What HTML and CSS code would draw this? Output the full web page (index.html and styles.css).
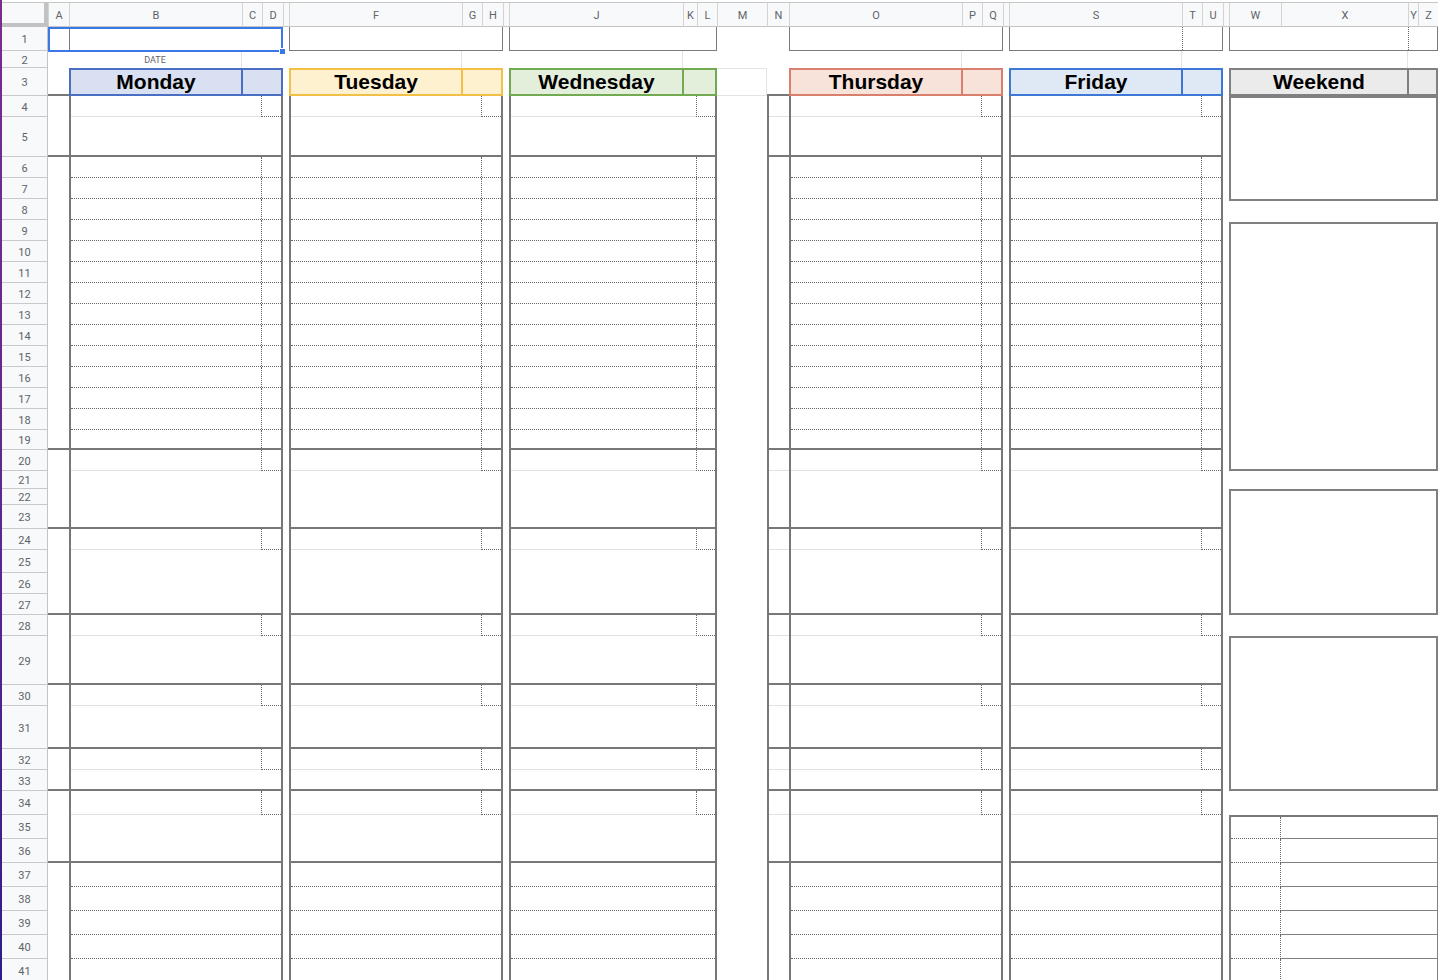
FILE: index.html
```html
<!DOCTYPE html>
<html lang="en">
<head>
<meta charset="utf-8">
<title>Weekly Planner</title>
<link rel="stylesheet" href="styles.css">
</head>
<body>
<div class="app">
  <div class="strip"></div>
  <div class="sheet">
    <div class="colhead">
      <div class="corner"></div>
      <div class="ch w21">A</div>
      <div class="ch w173">B</div>
      <div class="ch w20">C</div>
      <div class="ch w21">D</div>
      <div class="ch w6"></div>
      <div class="ch w173">F</div>
      <div class="ch w20">G</div>
      <div class="ch w21">H</div>
      <div class="ch w6"></div>
      <div class="ch w174">J</div>
      <div class="ch w14">K</div>
      <div class="ch w20">L</div>
      <div class="ch w50">M</div>
      <div class="ch w22">N</div>
      <div class="ch w173">O</div>
      <div class="ch w20">P</div>
      <div class="ch w21">Q</div>
      <div class="ch w6"></div>
      <div class="ch w173">S</div>
      <div class="ch w20">T</div>
      <div class="ch w21">U</div>
      <div class="ch w6"></div>
      <div class="ch w52">W</div>
      <div class="ch w127">X</div>
      <div class="ch w10">Y</div>
      <div class="ch w20">Z</div>
    </div>

    <div class="grid">
      <div class="rowhead">
        <div class="rn h24">1</div>
        <div class="rn h17">2</div>
        <div class="rn h28">3</div>
        <div class="rn">4</div>
        <div class="rn h40">5</div>
        <div class="rn">6</div>
        <div class="rn">7</div>
        <div class="rn">8</div>
        <div class="rn">9</div>
        <div class="rn">10</div>
        <div class="rn">11</div>
        <div class="rn">12</div>
        <div class="rn">13</div>
        <div class="rn">14</div>
        <div class="rn">15</div>
        <div class="rn">16</div>
        <div class="rn">17</div>
        <div class="rn">18</div>
        <div class="rn h20">19</div>
        <div class="rn">20</div>
        <div class="rn h18">21</div>
        <div class="rn h16">22</div>
        <div class="rn h24">23</div>
        <div class="rn">24</div>
        <div class="rn h23">25</div>
        <div class="rn">26</div>
        <div class="rn">27</div>
        <div class="rn">28</div>
        <div class="rn h49">29</div>
        <div class="rn">30</div>
        <div class="rn h43">31</div>
        <div class="rn">32</div>
        <div class="rn">33</div>
        <div class="rn h24">34</div>
        <div class="rn h24">35</div>
        <div class="rn h24">36</div>
        <div class="rn h24">37</div>
        <div class="rn h24">38</div>
        <div class="rn h24">39</div>
        <div class="rn h24">40</div>
        <div class="rn h24">41</div>
      </div>

      <!-- column A -->
      <div class="side sa">
        <div class="sp"></div>
        <div class="ss s1"></div>
        <div class="ss s2"></div>
        <div class="ss s3"></div>
        <div class="ss s4"></div>
        <div class="ss s5"></div>
        <div class="ss s6"></div>
        <div class="ss s7"></div>
        <div class="ss s8"></div>
      </div>

      <!-- Monday -->
      <div class="day mon">
        <div class="r1"><div class="rm"></div></div>
        <div class="r2"><div class="rm">DATE</div></div>
        <div class="hdr"><div class="hm">Monday</div><div class="hx"></div></div>
        <div class="sec s1"><div class="lead"></div></div>
        <div class="sec s2">
          <div class="ln"></div><div class="ln"></div><div class="ln"></div><div class="ln"></div><div class="ln"></div>
          <div class="ln"></div><div class="ln"></div><div class="ln"></div><div class="ln"></div><div class="ln"></div>
          <div class="ln"></div><div class="ln"></div><div class="ln"></div><div class="ln last"></div>
        </div>
        <div class="sec s3"><div class="lead"></div></div>
        <div class="sec s4"><div class="lead"></div></div>
        <div class="sec s5"><div class="lead"></div></div>
        <div class="sec s6"><div class="lead"></div></div>
        <div class="sec s7"><div class="lead"></div></div>
        <div class="sec s8"><div class="lead tall"></div></div>
        <div class="sec s9"><div class="ln2"></div><div class="ln2"></div><div class="ln2"></div><div class="ln2"></div><div class="ln2"></div></div>
      </div>

      <div class="gap"></div>

      <!-- Tuesday -->
      <div class="day tue">
        <div class="r1"><div class="rm"></div></div>
        <div class="r2"><div class="rm"></div></div>
        <div class="hdr"><div class="hm">Tuesday</div><div class="hx"></div></div>
        <div class="sec s1"><div class="lead"></div></div>
        <div class="sec s2">
          <div class="ln"></div><div class="ln"></div><div class="ln"></div><div class="ln"></div><div class="ln"></div>
          <div class="ln"></div><div class="ln"></div><div class="ln"></div><div class="ln"></div><div class="ln"></div>
          <div class="ln"></div><div class="ln"></div><div class="ln"></div><div class="ln last"></div>
        </div>
        <div class="sec s3"><div class="lead"></div></div>
        <div class="sec s4"><div class="lead"></div></div>
        <div class="sec s5"><div class="lead"></div></div>
        <div class="sec s6"><div class="lead"></div></div>
        <div class="sec s7"><div class="lead"></div></div>
        <div class="sec s8"><div class="lead tall"></div></div>
        <div class="sec s9"><div class="ln2"></div><div class="ln2"></div><div class="ln2"></div><div class="ln2"></div><div class="ln2"></div></div>
      </div>

      <div class="gap"></div>

      <!-- Wednesday -->
      <div class="day wed">
        <div class="r1"><div class="rm"></div></div>
        <div class="r2"><div class="rm"></div></div>
        <div class="hdr"><div class="hm">Wednesday</div><div class="hx"></div></div>
        <div class="sec s1"><div class="lead"></div></div>
        <div class="sec s2">
          <div class="ln"></div><div class="ln"></div><div class="ln"></div><div class="ln"></div><div class="ln"></div>
          <div class="ln"></div><div class="ln"></div><div class="ln"></div><div class="ln"></div><div class="ln"></div>
          <div class="ln"></div><div class="ln"></div><div class="ln"></div><div class="ln last"></div>
        </div>
        <div class="sec s3"><div class="lead"></div></div>
        <div class="sec s4"><div class="lead"></div></div>
        <div class="sec s5"><div class="lead"></div></div>
        <div class="sec s6"><div class="lead"></div></div>
        <div class="sec s7"><div class="lead"></div></div>
        <div class="sec s8"><div class="lead tall"></div></div>
        <div class="sec s9"><div class="ln2"></div><div class="ln2"></div><div class="ln2"></div><div class="ln2"></div><div class="ln2"></div></div>
      </div>

      <!-- column M -->
      <div class="mcol"><div class="m3"></div></div>

      <!-- column N -->
      <div class="side sn">
        <div class="sp"></div>
        <div class="ss s1"><div class="nl"></div></div>
        <div class="ss s2"></div>
        <div class="ss s3"><div class="nl"></div></div>
        <div class="ss s4"><div class="nl"></div></div>
        <div class="ss s5"><div class="nl"></div></div>
        <div class="ss s6"><div class="nl"></div></div>
        <div class="ss s7"><div class="nl"></div></div>
        <div class="ss s8"><div class="nl tall"></div></div>
        <div class="ss s9"></div>
      </div>

      <!-- Thursday -->
      <div class="day thu">
        <div class="r1"><div class="rm"></div></div>
        <div class="r2"><div class="rm"></div></div>
        <div class="hdr"><div class="hm">Thursday</div><div class="hx"></div></div>
        <div class="sec s1"><div class="lead"></div></div>
        <div class="sec s2">
          <div class="ln"></div><div class="ln"></div><div class="ln"></div><div class="ln"></div><div class="ln"></div>
          <div class="ln"></div><div class="ln"></div><div class="ln"></div><div class="ln"></div><div class="ln"></div>
          <div class="ln"></div><div class="ln"></div><div class="ln"></div><div class="ln last"></div>
        </div>
        <div class="sec s3"><div class="lead"></div></div>
        <div class="sec s4"><div class="lead"></div></div>
        <div class="sec s5"><div class="lead"></div></div>
        <div class="sec s6"><div class="lead"></div></div>
        <div class="sec s7"><div class="lead"></div></div>
        <div class="sec s8"><div class="lead tall"></div></div>
        <div class="sec s9"><div class="ln2"></div><div class="ln2"></div><div class="ln2"></div><div class="ln2"></div><div class="ln2"></div></div>
      </div>

      <div class="gap"></div>

      <!-- Friday -->
      <div class="day fri">
        <div class="r1"><div class="rm dot"></div></div>
        <div class="r2"><div class="rm"></div></div>
        <div class="hdr"><div class="hm">Friday</div><div class="hx"></div></div>
        <div class="sec s1"><div class="lead"></div></div>
        <div class="sec s2">
          <div class="ln"></div><div class="ln"></div><div class="ln"></div><div class="ln"></div><div class="ln"></div>
          <div class="ln"></div><div class="ln"></div><div class="ln"></div><div class="ln"></div><div class="ln"></div>
          <div class="ln"></div><div class="ln"></div><div class="ln"></div><div class="ln last"></div>
        </div>
        <div class="sec s3"><div class="lead"></div></div>
        <div class="sec s4"><div class="lead"></div></div>
        <div class="sec s5"><div class="lead"></div></div>
        <div class="sec s6"><div class="lead"></div></div>
        <div class="sec s7"><div class="lead"></div></div>
        <div class="sec s8"><div class="lead tall"></div></div>
        <div class="sec s9"><div class="ln2"></div><div class="ln2"></div><div class="ln2"></div><div class="ln2"></div><div class="ln2"></div></div>
      </div>

      <div class="gap"></div>

      <!-- Weekend -->
      <div class="weekend">
        <div class="r1"><div class="rm dot"></div></div>
        <div class="r2"><div class="rm"></div></div>
        <div class="hdr"><div class="hm">Weekend</div><div class="hx"></div></div>
        <div class="wbox b1"></div>
        <div class="wgap g21"></div>
        <div class="wbox b2"></div>
        <div class="wgap g18"></div>
        <div class="wbox b3"></div>
        <div class="wgap g21"></div>
        <div class="wbox b4"></div>
        <div class="wgap g24"></div>
        <div class="wtable">
          <div class="tr first"><div class="tw"></div><div class="tx"></div></div>
          <div class="tr"><div class="tw"></div><div class="tx"></div></div>
          <div class="tr"><div class="tw"></div><div class="tx"></div></div>
          <div class="tr"><div class="tw"></div><div class="tx"></div></div>
          <div class="tr"><div class="tw"></div><div class="tx"></div></div>
          <div class="tr"><div class="tw"></div><div class="tx"></div></div>
          <div class="tr"><div class="tw"></div><div class="tx"></div></div>
        </div>
      </div>
    </div>
  </div>

  <div class="selection"><span class="handle"></span></div>
</div>
</body>
</html>
```

FILE: styles.css
```css
* { box-sizing: border-box; margin: 0; padding: 0; }

html, body {
  width: 1438px;
  height: 980px;
  overflow: hidden;
  background: #fff;
}

body {
  font-family: Roboto, "Liberation Sans", Arial, sans-serif;
  color: #202124;
}

.app {
  position: relative;
  display: flex;
  height: 980px;
}

.strip {
  flex: none;
  width: 2px;
  background: linear-gradient(#7b2b8e, #5d2790 55%, #2f1c8a);
}

.sheet {
  flex: 1;
  display: flex;
  flex-direction: column;
  padding-top: 2px;
  min-width: 0;
}

/* ---------- column header ---------- */
.colhead {
  flex: none;
  display: flex;
  height: 25px;
}

.corner {
  flex: none;
  width: 46px;
  background: #f8f9fa;
  border-top: 1px solid #c7c7c7;
  border-right: 4px solid #c2c2c2;
  border-bottom: 4px solid #c2c2c2;
}

.ch {
  flex: none;
  height: 25px;
  background: #f8f9fa;
  border-top: 1px solid #c7c7c7;
  border-bottom: 1px solid #c4c4c4;
  border-left: 1px solid #d3d3d3;
  font-size: 11px;
  line-height: 24px;
  padding-top: 1px;
  color: #5f6368;
  text-align: center;
  overflow: hidden;
}

.w6 { width: 6px; }
.w10 { width: 10px; }
.w14 { width: 14px; }
.w20 { width: 20px; }
.w21 { width: 21px; }
.w22 { width: 22px; }
.w50 { width: 50px; }
.w52 { width: 52px; }
.w127 { width: 127px; }
.w173 { width: 173px; }
.w174 { width: 174px; }

/* ---------- body ---------- */
.grid {
  flex: 1;
  display: flex;
  overflow: hidden;
}

.rowhead {
  flex: none;
  width: 46px;
  display: flex;
  flex-direction: column;
  background: #f8f9fa;
  border-right: 1px solid #c4c4c4;
}

.rn {
  flex: none;
  height: 21px;
  padding-top: 2px;
  border-bottom: 1px solid #c9c9c9;
  font-size: 11px;
  color: #5f6368;
  display: flex;
  align-items: center;
  justify-content: center;
}

.h16 { height: 16px; }
.h17 { height: 17px; }
.h18 { height: 18px; }
.h20 { height: 20px; }
.h23 { height: 23px; }
.h24 { height: 24px; }
.h28 { height: 28px; }
.h40 { height: 40px; }
.h43 { height: 43px; }
.h49 { height: 49px; }

.gap { flex: none; width: 6px; }

/* section heights, shared by day and side columns */
.s1 { height: 61px; }
.s2 { height: 293px; }
.s3 { height: 79px; }
.s4 { height: 86px; }
.s5 { height: 70px; }
.s6 { height: 64px; }
.s7 { height: 42px; }
.s8 { height: 72px; }

/* ---------- side columns (A, N) ---------- */
.side {
  flex: none;
  display: flex;
  flex-direction: column;
}

.sa { width: 21px; }
.sn { width: 22px; }

.sp {
  flex: none;
  height: 69px;
  border-bottom: 2px solid #777;
}

.ss {
  flex: none;
  border-bottom: 2px solid #777;
}

.sn .ss { border-left: 2px solid #777; }
.sn .ss.s9 { flex: 1; border-bottom: 0; }

.nl {
  height: 21px;
  border-bottom: 1px solid #e1e1e1;
}
.nl.tall { height: 24px; }

/* ---------- M column ---------- */
.mcol {
  flex: none;
  width: 50px;
}

.m3 {
  margin-top: 41px;
  height: 28px;
  border: 1px solid #e3e3e3;
  border-left: 0;
}

/* ---------- day columns ---------- */
.day {
  flex: none;
  width: 214px;
  display: flex;
  flex-direction: column;
  --main: 173px;
  --box: 19px;
}

.wed { width: 208px; --main: 174px; --box: 18px; }

.mon { --bc: #4a6ec4; --bg: #d9e0f1; }
.tue { --bc: #f3c047; --bg: #fdf1cf; }
.wed { --bc: #72aa52; --bg: #e3eedb; }
.thu { --bc: #d8806d; --bg: #f7e3d9; }
.fri { --bc: #3f77d6; --bg: #dfe8f5; }

.r1 {
  flex: none;
  height: 24px;
  display: flex;
  border: 1px solid #7a7a7a;
  border-top: 0;
}

.r1 .rm { width: var(--main); }
.r1 .rm.dot { border-right: 1px dotted #666; }

.r2 {
  flex: none;
  height: 17px;
  display: flex;
}

.r2 .rm {
  width: var(--main);
  border-right: 1px solid #e3e3e3;
  font-size: 9px;
  line-height: 17px;
  padding-top: 1px;
  color: #5f6368;
  text-align: center;
}

.hdr {
  flex: none;
  height: 28px;
  display: flex;
  border: 2px solid var(--bc);
  background: var(--bg);
}

.hm {
  flex: none;
  width: calc(var(--main) - 1px);
  border-right: 2px solid var(--bc);
  font: 700 21px/24px "Liberation Sans", Arial, sans-serif;
  color: #000;
  text-align: center;
}

.hx { flex: 1; }

.sec {
  flex: none;
  display: flex;
  flex-direction: column;
  border: 2px solid #777;
  border-top: 0;
}

.sec.s9 {
  flex: 1;
  border-bottom: 0;
}

.lead {
  flex: none;
  height: 21px;
  display: flex;
}
.lead.tall { height: 24px; }

.lead::before {
  content: "";
  flex: 1;
  border-bottom: 1px solid #e1e1e1;
}

.lead::after {
  content: "";
  flex: none;
  width: var(--box);
  border-left: 1px dotted #666;
  border-bottom: 1px dotted #666;
}

.ln {
  flex: none;
  height: 21px;
  display: flex;
  justify-content: flex-end;
  border-bottom: 1px dotted #666;
}

.ln::after {
  content: "";
  flex: none;
  width: var(--box);
  border-left: 1px dotted #666;
}

.ln.last {
  flex: 1;
  border-bottom: 0;
}

.ln2 {
  flex: none;
  height: 24px;
  border-bottom: 1px dotted #666;
}

/* ---------- weekend ---------- */
.weekend {
  flex: none;
  width: 209px;
  display: flex;
  flex-direction: column;
  --main: 179px;
  --bc: #808080;
  --bg: #ebebeb;
}

.wbox {
  flex: none;
  border: 2px solid #808080;
}

.b1 { height: 105px; }
.b2 { height: 249px; }
.b3 { height: 126px; }
.b4 { height: 155px; }

.wgap { flex: none; }
.g18 { height: 18px; }
.g21 { height: 21px; }
.g24 { height: 24px; }

.wtable {
  flex: 1;
  display: flex;
  flex-direction: column;
  border-top: 2px solid #777;
  border-left: 2px solid #808080;
  border-right: 1px solid #808080;
}

.tr {
  flex: none;
  height: 24px;
  display: flex;
}
.tr.first { height: 22px; }

.tw {
  flex: none;
  width: 50px;
  border-right: 1px dotted #666;
  border-bottom: 1px dotted #666;
}

.tx {
  flex: 1;
  border-bottom: 1px solid #808080;
}

/* ---------- active selection overlay ---------- */
.selection {
  position: absolute;
  left: 48px;
  top: 27px;
  width: 235px;
  height: 25px;
  border: 2px solid #3b78e7;
  pointer-events: none;
}

.handle {
  position: absolute;
  right: -5px;
  bottom: -5px;
  width: 7px;
  height: 7px;
  background: #3b78e7;
  border: 1px solid #fff;
}
```
